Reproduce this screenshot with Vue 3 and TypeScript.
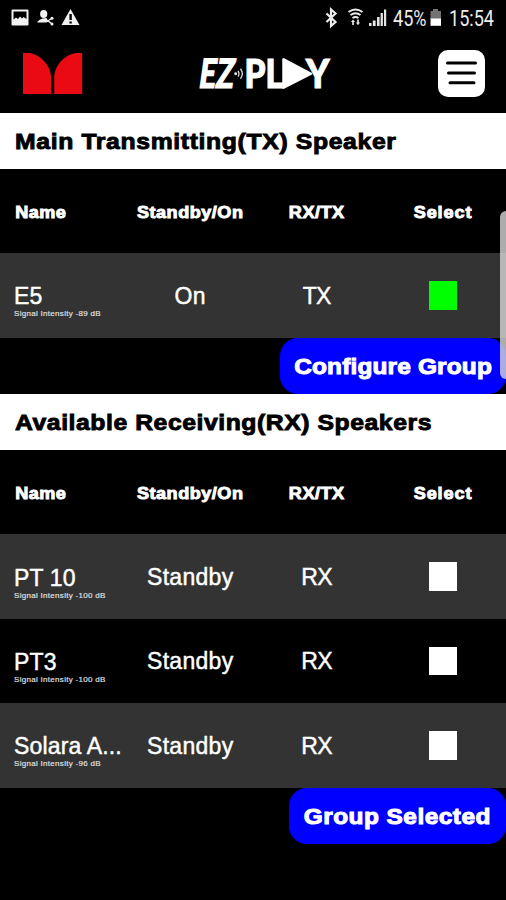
<script setup lang="ts">
interface Speaker {
  name: string
  signal: number
  state: string
  role: string
  selected: boolean
}
interface Section {
  title: string
  kind: string
  action: string
  speakers: Speaker[]
}

const columns: string[] = ['Name', 'Standby/On', 'RX/TX', 'Select']

const sections: Section[] = [
  {
    title: 'Main Transmitting(TX) Speaker',
    kind: 'tx',
    action: 'Configure Group',
    speakers: [{ name: 'E5', signal: -89, state: 'On', role: 'TX', selected: true }],
  },
  {
    title: 'Available Receiving(RX) Speakers',
    kind: 'rx',
    action: 'Group Selected',
    speakers: [
      { name: 'PT 10', signal: -100, state: 'Standby', role: 'RX', selected: false },
      { name: 'PT3', signal: -100, state: 'Standby', role: 'RX', selected: false },
      { name: 'Solara A...', signal: -96, state: 'Standby', role: 'RX', selected: false },
    ],
  },
]
</script>

<template>
  <div class="screen">
    <div class="status">
      <svg class="status-icons" width="90" height="36" viewBox="0 0 90 36">
        <path fill="#f2f2f2" fill-rule="evenodd" d="M12.500 9.500h15a1 1 0 0 1 1 1v14a1 1 0 0 1-1 1h-15a1 1 0 0 1-1-1v-14a1 1 0 0 1 1-1zM13.500 11.500v8l2.500-2 2 1.500 2-2.500 2 2 1.500-1.500 3 2v-7.500z" />
        <ellipse cx="43.700" cy="14" rx="3.600" ry="4" fill="#f2f2f2" />
        <path fill="#f2f2f2" d="M37.500 21.500q3-2.500 5-3l4-.5 2 3.500-2 1h-9z" />
        <path d="M52 18.200l-4 2.500 4 3.300" fill="none" stroke="#f2f2f2" stroke-width="1.300" />
        <circle cx="52" cy="18.200" r="1.500" fill="#f2f2f2" />
        <circle cx="52" cy="24" r="1.500" fill="#f2f2f2" />
        <path fill="#f2f2f2" d="M70.500 9l9 16h-18z" />
        <path d="M70.600 14v6M70.600 21.500v2" stroke="#000" stroke-width="2.400" />
      </svg>
      <div class="status-right">
        <svg width="66" height="36" viewBox="324 0 66 36">
          <path d="M326.500 13.500l9 8.500-4.500 4V9.500l4.500 4-9 8.500" fill="none" stroke="#ededed" stroke-width="2.200" />
          <path d="M348.500 12q7-5 14 0M350.500 15q5-3.500 10 0M352.500 18q3-2 6 0" fill="none" stroke="#ededed" stroke-width="2" />
          <path d="M351 22l2-2.500 2 2.500h-1.200v3h-1.600v-3zM356 22.500h1.200v-3h1.600v3h1.200l-2 2.800z" fill="#ededed" />
          <path d="M369 23h2.500v3H369zM372.800 20.500h2.800v5.500h-2.800zM377 17h2.600v9H377zM380.600 13h2.300v13h-2.300zM384 9.500h2.200V26H384z" fill="#e4e4e4" />
        </svg>
        <span class="percent"><span>45%</span></span>
        <svg width="12" height="36" viewBox="0 0 12 36">
          <path d="M3 9h5v2h3v8H.5v-8H3z" fill="#737373" />
          <path d="M.5 18.500H11v7.300H.5z" fill="#fff" />
        </svg>
        <span class="clock">15:54</span>
      </div>
    </div>

    <header class="appbar">
      <svg class="brand" width="60" height="42" viewBox="0 0 60 42">
        <path fill="#ea0a14" d="M0 0h6.500C18 2 28.200 13 28.200 25v16H0zM59.200 0h-6.500C41 2 31.200 13 31.200 25v16h28z" />
      </svg>
      <svg class="logo" width="160" height="64" viewBox="184 41.250 160 64">
        <g class="logo-text" fill="#fff" stroke="#fff" stroke-width="1.200">
          <text transform="translate(197.800 88.300) skewX(-8)" textLength="35" lengthAdjust="spacingAndGlyphs">EZ</text>
          <text x="244.500" y="88.300" textLength="38.500" lengthAdjust="spacingAndGlyphs">PL</text>
          <text x="306" y="88.300" textLength="23.500" lengthAdjust="spacingAndGlyphs">Y</text>
        </g>
        <path d="M283.500 59.500v28.500l27.500-14z" fill="#fff" stroke="#fff" stroke-width="2.500" stroke-linejoin="round" />
        <circle cx="235.700" cy="74" r="1.400" fill="#eee" />
        <path d="M238 71.200q2 2.800 0 5.600M240.500 69q3.600 5 0 10" fill="none" stroke="#ddd" stroke-width="1.300" />
      </svg>
      <button class="menu" aria-label="Menu">
        <svg width="47" height="47" viewBox="0 0 47 47">
          <path d="M9.500 13h28M10.500 23h26M12 32.700h24" stroke="#000" stroke-width="3" stroke-linecap="round" />
        </svg>
      </button>
    </header>

    <section v-for="section in sections" :key="section.kind" :class="section.kind">
      <h2 class="title"><span>{{ section.title }}</span></h2>
      <div class="row labels">
        <div v-for="column in columns" :key="column" class="cell"><span>{{ column }}</span></div>
      </div>
      <div v-for="speaker in section.speakers" :key="speaker.name" class="row speaker">
        <div class="cell name">
          <span>{{ speaker.name }}</span>
          <small>Signal Intensity {{ speaker.signal }} dB</small>
        </div>
        <span class="cell state">{{ speaker.state }}</span>
        <span class="cell state role">{{ speaker.role }}</span>
        <div class="cell"><i class="check" :class="{ on: speaker.selected }"></i></div>
      </div>
      <div class="actions">
        <button class="action"><span>{{ section.action }}</span></button>
      </div>
    </section>
    <div class="scrollbar"></div>
  </div>
</template>

<style>
body {
  background: #000;
}
</style>

<style scoped>
.screen {
  position: relative;
  width: 506px;
  height: 900px;
  overflow: hidden;
  background: #000;
  color: #fff;
  font-family: "Liberation Sans", sans-serif;
}
.status {
  display: flex;
  justify-content: space-between;
  height: 36px;
}
.status-right {
  display: flex;
  width: 182px;
  color: #ededed;
  font: 21.500px/37px Roboto, sans-serif;
}
.percent {
  width: 40px;
  padding-left: 3px;
  box-sizing: border-box;
}
.percent span,
.clock {
  display: inline-block;
  transform: scaleX(0.84);
  transform-origin: left;
}
.status-right svg {
  flex: none;
}
.clock {
  margin-left: 7px;
}
.appbar {
  display: flex;
  align-items: center;
  justify-content: space-between;
  box-sizing: border-box;
  height: 76.5px;
  padding: 0 21px 2px 23px;
}
.brand {
  margin-top: 2px;
}
.logo {
  margin-left: 7px;
}
.logo-text {
  font: 900 40.5px Lato, sans-serif;
}
.menu {
  display: block;
  width: 47px;
  height: 47px;
  padding: 0;
  border: 0;
  border-radius: 10px;
  background: #fff;
}
.menu svg {
  display: block;
}
.title {
  display: flex;
  align-items: center;
  box-sizing: border-box;
  height: 56.25px;
  margin: 0;
  padding: 3px 0 0 14.5px;
  background: #fff;
  color: #000;
  font: bold 22.5px "Liberation Sans", sans-serif;
  letter-spacing: 0.5px;
  white-space: nowrap;
  -webkit-text-stroke: 0.9px #000;
}
.title span {
  transform: scaleX(1.1);
  transform-origin: left;
}
.tx .title {
  letter-spacing: 0.58px;
}
.row {
  display: grid;
  grid-template-columns: repeat(4, 126.5px);
  align-items: center;
  height: 84.375px;
}
.cell {
  display: flex;
  justify-content: center;
  white-space: nowrap;
}
.labels {
  font: bold 16px "Liberation Sans", sans-serif;
  letter-spacing: 0.45px;
  -webkit-text-stroke: 0.9px #fff;
}
.labels span {
  padding: 4px 0 0 1px;
  transform: scaleX(1.13);
}
.labels .cell:first-child {
  justify-content: flex-start;
  padding-left: 13.5px;
}
.labels .cell:first-child span {
  transform-origin: left;
}
.labels .cell:last-child {
  letter-spacing: 0.8px;
}
.speaker {
  font-size: 23px;
  letter-spacing: 0.3px;
  -webkit-text-stroke: 0.45px #fff;
}
.speaker:nth-child(odd) {
  background: #333;
}
.state {
  padding: 2px 0 0 1px;
}
.role {
  letter-spacing: -0.6px;
}
.name {
  flex-direction: column;
  padding: 12px 0 0 14px;
}
.name span {
  line-height: 26px;
  letter-spacing: 0.15px;
}
.name small {
  color: #e4e4e4;
  font-size: 8px;
  line-height: 10px;
  letter-spacing: 0.3px;
  -webkit-text-stroke: 0.15px #e4e4e4;
}
.check {
  width: 28.500px;
  height: 28.500px;
  background: #fff;
}
.check.on {
  background: #0f0;
}
.actions {
  display: flex;
  justify-content: flex-end;
  height: 56.25px;
}
.action {
  display: flex;
  align-items: center;
  justify-content: center;
  width: 226px;
  height: 56.25px;
  padding: 3px 0 0;
  border: 0;
  border-radius: 18px;
  background: #00f;
  color: #fff;
  font: bold 22.5px "Liberation Sans", sans-serif;
  letter-spacing: 0.15px;
  white-space: nowrap;
  -webkit-text-stroke: 1px #fff;
}
.action span {
  transform: scaleX(1.085);
}
.rx .action {
  width: 217px;
  letter-spacing: 0.45px;
}
.scrollbar {
  position: absolute;
  top: 211px;
  right: -7px;
  width: 13px;
  height: 168px;
  border-radius: 6px;
  background: rgba(220, 220, 220, 0.78);
}
</style>
